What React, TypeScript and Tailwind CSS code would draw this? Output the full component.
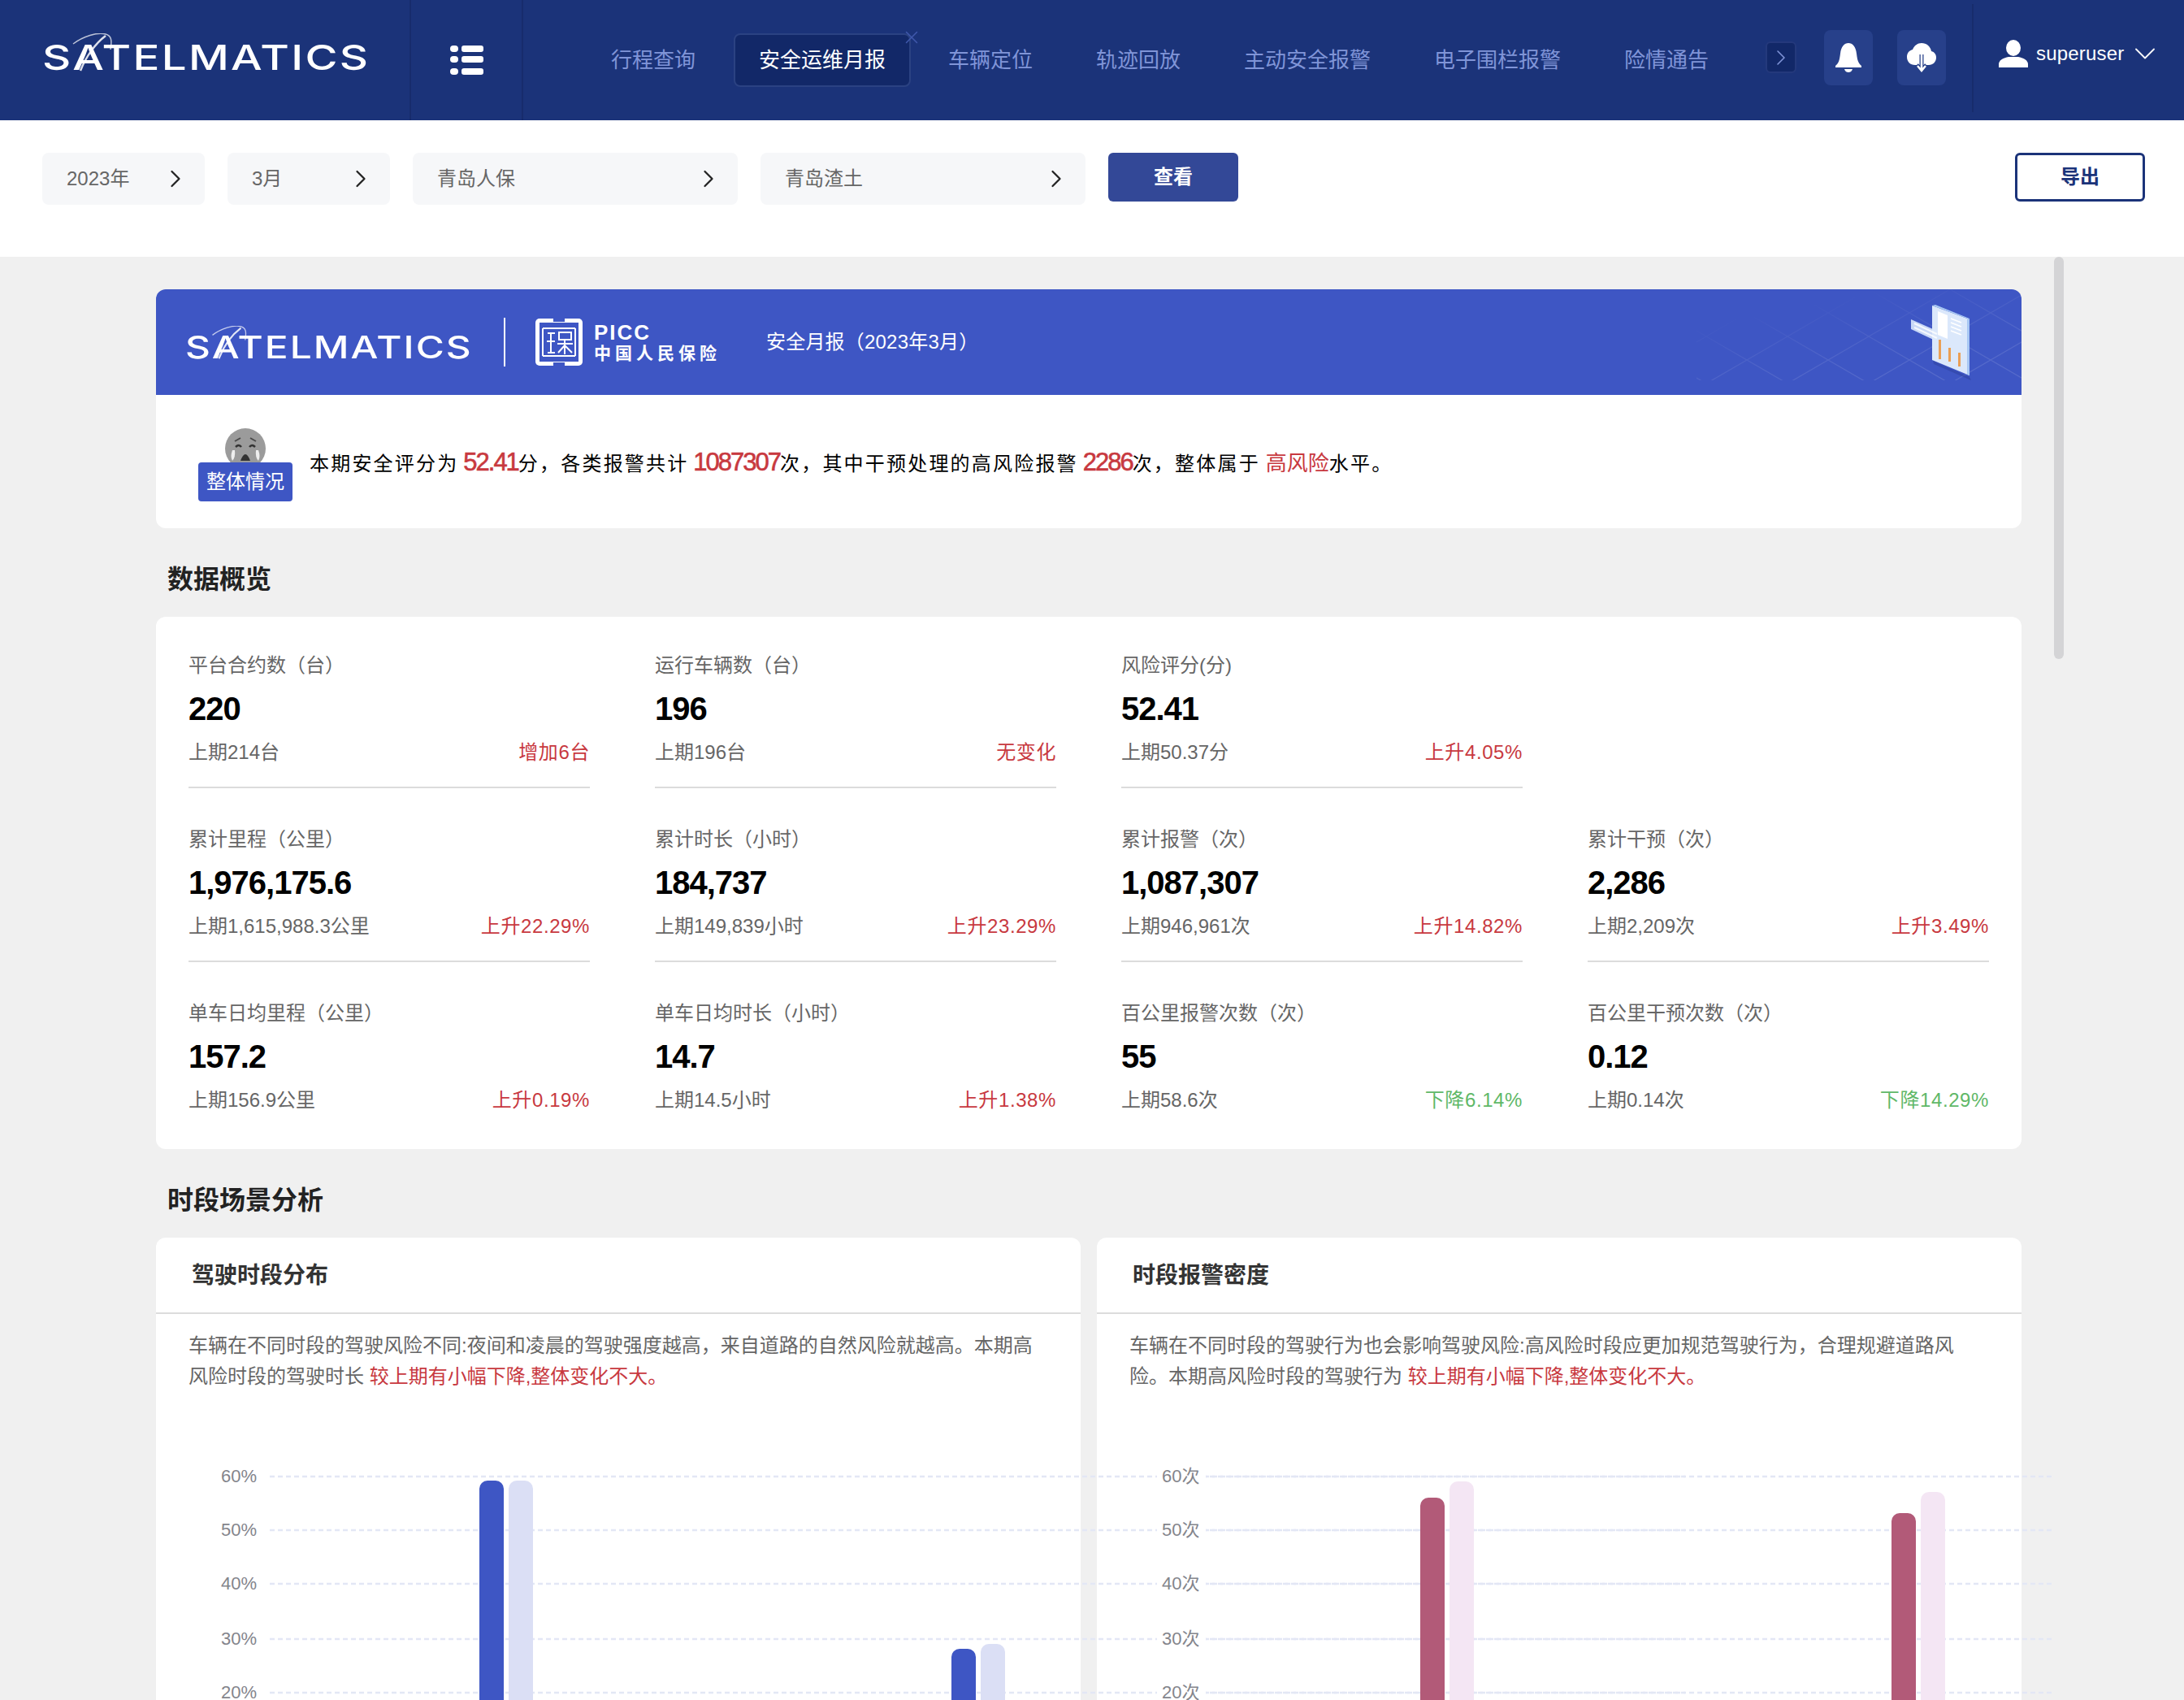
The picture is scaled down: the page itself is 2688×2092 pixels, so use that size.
import * as React from "react";
import { ChevronDown, ChevronRight, X } from "lucide-react";

const NAV = ["行程查询", "安全运维月报", "车辆定位", "轨迹回放", "主动安全报警", "电子围栏报警", "险情通告"];

type Stat = { label: string; value: string; prev: string; delta: string; down?: boolean } | null;

const STATS: Stat[] = [
  { label: "平台合约数（台）", value: "220", prev: "上期214台", delta: "增加6台" },
  { label: "运行车辆数（台）", value: "196", prev: "上期196台", delta: "无变化" },
  { label: "风险评分(分)", value: "52.41", prev: "上期50.37分", delta: "上升4.05%" },
  null,
  { label: "累计里程（公里）", value: "1,976,175.6", prev: "上期1,615,988.3公里", delta: "上升22.29%" },
  { label: "累计时长（小时）", value: "184,737", prev: "上期149,839小时", delta: "上升23.29%" },
  { label: "累计报警（次）", value: "1,087,307", prev: "上期946,961次", delta: "上升14.82%" },
  { label: "累计干预（次）", value: "2,286", prev: "上期2,209次", delta: "上升3.49%" },
  { label: "单车日均里程（公里）", value: "157.2", prev: "上期156.9公里", delta: "上升0.19%" },
  { label: "单车日均时长（小时）", value: "14.7", prev: "上期14.5小时", delta: "上升1.38%" },
  { label: "百公里报警次数（次）", value: "55", prev: "上期58.6次", delta: "下降6.14%", down: true },
  { label: "百公里干预次数（次）", value: "0.12", prev: "上期0.14次", delta: "下降14.29%", down: true },
];

function Logo({ large }: { large?: boolean }) {
  return (
    <div className={large ? "relative w-[398px] h-[48px]" : "relative w-[350px] h-[42px]"}>
      <span
        className={
          large
            ? "absolute left-0 bottom-[-5px] origin-left scale-x-[1.27] font-['Inter'] font-medium text-[43px] leading-[48px] tracking-[1.8px] text-white whitespace-nowrap"
            : "absolute left-0 bottom-[-5px] origin-left scale-x-[1.26] font-['Inter'] font-medium text-[38px] leading-[42px] tracking-[1.6px] text-white whitespace-nowrap"
        }
      >
        SATELMATICS
      </span>
      <svg viewBox="0 0 100 48" className={large ? "absolute left-0 top-0 w-[100px] h-[48px]" : "absolute left-0 top-0 w-[88px] h-[42px]"}>
        <path d="M38 13C50 4 68 -2 78 1C85 3 86 8 84 20" fill="none" stroke="#fff" strokeWidth="1.5" opacity="0.7" />
        <path d="M47 46C54 28 66 12 78 3" fill="none" stroke="#fff" strokeWidth="2.5" opacity="0.85" />
      </svg>
    </div>
  );
}

function Seal() {
  return (
    <svg viewBox="0 0 58 58" className="w-[58px] h-[58px]">
      <rect x="0" y="0" width="58" height="58" rx="5" fill="#fff" />
      <rect x="5" y="5" width="48" height="48" fill="#3e56c4" />
      <g stroke="#fff" strokeWidth="2" fill="none">
        <path d="M9 12H49M9 46H49M9 12V46M49 12V46" />
        <path d="M15 18H24M19 18V42M14 28H24M15 42H24M29 17H44V26H29ZM27 31H46M36 26V44M36 33L28 42M36 33L45 42" />
      </g>
      <rect x="22" y="0" width="14" height="4" fill="#3e56c4" />
      <rect x="22" y="54" width="14" height="4" fill="#3e56c4" />
    </svg>
  );
}

function Illustration() {
  return (
    <svg viewBox="0 0 400 130" className="absolute right-0 top-0 w-[400px] h-[130px]">
      <defs>
        <pattern id="iso" width="100" height="58" patternUnits="userSpaceOnUse" patternTransform="translate(12 0)">
          <path d="M0 0L100 58M100 0L0 58" stroke="#fff" strokeWidth="1.2" opacity="0.12" />
        </pattern>
        <linearGradient id="fade" x1="0" y1="0" x2="0.7" y2="1">
          <stop offset="0.25" stopColor="#fff" stopOpacity="0" />
          <stop offset="0.7" stopColor="#fff" stopOpacity="0.75" />
          <stop offset="1" stopColor="#fff" stopOpacity="1" />
        </linearGradient>
        <mask id="fadeMask">
          <rect width="400" height="112" fill="url(#fade)" />
        </mask>
      </defs>
      <rect width="400" height="112" fill="url(#iso)" mask="url(#fadeMask)" />
      <path d="M291 88L336 108L338 112L292 92Z" fill="#2c3f9c" opacity="0.5" />
      <path d="M264 37L300 53V66L264 49Z" fill="#c9d8f7" />
      <path d="M290 20L336 37V106L290 87Z" fill="#dbe8fb" />
      <path d="M290 20L294 19L336 36V37L290 20ZM333 37L336 37V106L333 105Z" fill="#a8c8f3" />
      <path d="M297 27L309 32V61L297 56Z" fill="#fff" />
      <path d="M313 36L326 41M313 41L326 46M313 46L326 51M313 51L326 56" stroke="#fff" strokeWidth="1.5" />
      <path d="M268 42L296 55M268 47L296 60" stroke="#fff" strokeWidth="2" opacity="0.8" />
      <rect x="298" y="62" width="3" height="24" fill="#ea9f55" />
      <rect x="310" y="72" width="3" height="17" fill="#ea9f55" />
      <rect x="322" y="78" width="3" height="17" fill="#ea9f55" />
    </svg>
  );
}

function CryFace() {
  return (
    <svg viewBox="0 0 50 50" className="w-[50px] h-[50px]">
      <circle cx="25" cy="25" r="25" fill="#9b9b9b" />
      <path d="M12 16L19 12M38 16L31 12" stroke="#4a4a4a" strokeWidth="2" fill="none" />
      <path d="M13 23Q17 19 20 23M30 23Q33 19 37 23" stroke="#333" strokeWidth="2.5" fill="none" />
      <path d="M19 40Q25 24 31 40Z" fill="#333" />
      <path d="M9 27Q6 35 9 40Q13 36 12 27ZM41 27Q44 35 41 40Q37 36 38 27Z" fill="#eee" />
    </svg>
  );
}

function Chart({ className, unit, left, right, dark, light, dashOffset, labelBg, bars }: {
  className: string; unit: string; left: number; right: number; dark: string; light: string; dashOffset: number; labelBg?: boolean; bars: number[][];
}) {
  const rows = [[60, 294], [50, 360], [40, 426], [30, 494], [20, 560]];
  return (
    <svg width="1900" height="620" className={`absolute top-0 overflow-visible pointer-events-none ${className}`}>
      {rows.map(([v, y]) => (
        <g key={v}>
          <line x1={left} x2={right} y1={y} y2={y} stroke="#e3e7f5" strokeWidth="2.5" strokeDasharray="6 4" strokeDashoffset={dashOffset} />
          {labelBg && <rect x="74" y={y - 14} width="60" height="28" fill="#fff" />}
          <text x="80" y={y + 7} fontSize="22" fill="#84858c">{v}{unit}</text>
        </g>
      ))}
      {bars.map(([x, a, b]) => (
        <g key={x}>
          <path d={`M${x} 620V${a + 10}a10 10 0 0 1 10 -10h10a10 10 0 0 1 10 10V620Z`} fill={dark} />
          <path d={`M${x + 36} 620V${b + 10}a10 10 0 0 1 10 -10h10a10 10 0 0 1 10 10V620Z`} fill={light} />
        </g>
      ))}
    </svg>
  );
}

function Filter({ label, wide }: { label: string; wide?: boolean }) {
  return (
    <div className={`${wide ? "w-[400px]" : "w-[200px]"} h-[64px] rounded-[8px] bg-[#f6f7f9] flex items-center justify-between pl-[30px] pr-[18px] text-[24px] text-[#666666]`}>
      <span>{label}</span>
      <ChevronRight size={36} strokeWidth={1.5} className="text-[#222222]" />
    </div>
  );
}

function StatCell({ stat, last }: { stat: Stat; last: boolean }) {
  if (!stat) return <div />;
  return (
    <div className={last ? "pb-[24px] border-b-2 border-transparent" : "pb-[24px] border-b-2 border-[#dcdcdc]"}>
      <div className="text-[24px] leading-[36px] text-[#666666]">{stat.label}</div>
      <div className="mt-[11px] text-[40px] leading-[48px] tracking-[-1px] font-bold text-black">{stat.value}</div>
      <div className="mt-[12px] flex justify-between text-[24px] leading-[36px]">
        <span className="text-[#666666]">{stat.prev}</span>
        <span className={stat.down ? "tracking-[0.6px] text-[#5fb868]" : "tracking-[0.6px] text-[#c8393f]"}>{stat.delta}</span>
      </div>
    </div>
  );
}

function navItemClass(i: number) {
  if (i === 0) return "whitespace-nowrap mr-[47px]";
  if (i === 1) return "relative whitespace-nowrap mr-[46px] px-[29px] h-[66px] flex items-center rounded-[8px] bg-[#122868] border-2 border-[#2b4282] text-white";
  return "whitespace-nowrap mr-[78px]";
}

const RED_NUM = "ml-[-3px] text-[31px] font-normal tracking-[-2px] text-[#c8393f] [-webkit-text-stroke:0.6px_#c8393f]";

export default function App() {
  return (
    <div className="relative w-[2688px] h-[2092px] overflow-hidden bg-[#f0f0f0] font-['Liberation_Sans','Noto_Sans_CJK_SC',sans-serif]">
      <header className="h-[148px] bg-[#1b3379] flex">
        <div className="w-[504px] pl-[52px] pt-[41px]"><Logo large /></div>
        <div className="w-[140px] border-x-2 border-[#172c6c] flex items-center justify-center pb-[1px]">
          <svg viewBox="0 0 41 37" className="w-[41px] h-[37px]">
            {[1, 14, 29].map((y) => (
              <g key={y} fill="#fff">
                <rect x="0" y={y} width="10" height="8" rx="4" />
                <rect x="14" y={y} width="27" height="8" rx="3" />
              </g>
            ))}
          </svg>
        </div>
        <nav className="w-[1529px] h-[148px] pl-[108px] flex items-start text-[26px] text-[#8095d8]">
          <div className="flex items-center h-[66px] mt-[41px]">
            {NAV.map((n, i) => (
              <div key={n} className={navItemClass(i)}>
                {n}
                {i === 1 && <X size={26} strokeWidth={1.4} className="absolute right-[-16px] top-[-10px] text-[#3f58ab]" />}
              </div>
            ))}
          </div>
        </nav>
        <div className="flex-1 flex">
          <div className="flex items-start pt-[37px] gap-[30px] w-[223px]">
            <div className="w-[38px] h-[39px] mt-[14px] rounded-[6px] bg-[#122868] border-2 border-[#24397c] flex items-center justify-center">
              <ChevronRight size={32} strokeWidth={1.2} className="text-[#8095d8]" />
            </div>
            <div className="w-[60px] h-[68px] rounded-[8px] bg-[#27408a] flex items-center justify-center ml-[4px]">
              <svg viewBox="0 0 36 36" className="w-[36px] h-[36px]" fill="#fff">
                <path d="M18 0C23 0 27 4 28 13C29 21 30 25 34 28V30H2V28C6 25 7 21 8 13C9 4 13 0 18 0Z" />
                <path d="M13 32H23C22 35 20 36 18 36C16 36 14 35 13 32Z" />
              </svg>
            </div>
            <div className="w-[60px] h-[68px] rounded-[8px] bg-[#27408a] flex items-center justify-center">
              <svg viewBox="0 0 36 36" className="w-[36px] h-[36px]">
                <path d="M10 27C4 27 0 23 0 17C0 12 3 9 7 8C9 3 13 0 18 0C24 0 29 4 30 10C34 11 36 14 36 18C36 23 32 27 27 27Z" fill="#fff" />
                <path d="M18 14V34M12 27L18 34L24 27" stroke="#27408a" strokeWidth="5" fill="none" />
                <path d="M18 14V34M13 28L18 34L23 28" stroke="#fff" strokeWidth="2.5" fill="none" />
              </svg>
            </div>
          </div>
        </div>
        <div className="absolute left-[2427px] top-[5px] h-[133px] w-[2px] bg-[#172c6c]" />
        <div className="absolute left-[2460px] top-[49px] flex items-center h-[34px]">
          <svg viewBox="0 0 36 34" className="w-[36px] h-[34px]" fill="#fff">
            <ellipse cx="18" cy="10" rx="9" ry="10" />
            <path d="M0 34V30C0 25 6 22 12 21H24C30 22 36 25 36 30V34Z" />
          </svg>
          <span className="ml-[10px] text-[24px] tracking-[0.2px] text-white">superuser</span>
          <ChevronDown size={44} strokeWidth={1} className="ml-[3px] text-white" />
        </div>
      </header>

      <div className="h-[168px] bg-white pt-[40px] pl-[52px] pr-[48px] flex items-start">
        <div className="flex gap-[28px]">
          <Filter label="2023年" />
          <Filter label="3月" />
          <Filter label="青岛人保" wide />
          <Filter label="青岛渣土" wide />
        </div>
        <button className="ml-[28px] w-[160px] h-[60px] rounded-[6px] bg-[#334897] text-[24px] font-bold text-white">查看</button>
        <button className="ml-auto w-[160px] h-[60px] rounded-[6px] border-[3px] border-[#1b3379] bg-white text-[24px] font-bold text-[#1b3379]">导出</button>
      </div>

      <main className="w-[2296px] ml-[192px] pt-[40px]">
        <section className="rounded-[12px] bg-white">
          <div className="relative h-[130px] rounded-t-[12px] overflow-hidden bg-[#3e56c4] flex items-center text-white">
            <div className="ml-[36px] mb-[-2px]"><Logo /></div>
            <div className="ml-[42px] w-[2px] h-[60px] bg-white" />
            <div className="ml-[37px]"><Seal /></div>
            <div className="ml-[14px] flex flex-col">
              <span className="text-[26px] leading-[28px] font-bold tracking-[2px]">PICC</span>
              <span className="text-[21px] leading-[24px] font-bold tracking-[5px]">中国人民保险</span>
            </div>
            <span className="ml-[56px] text-[24px] tracking-[0.2px]">安全月报（2023年3月）</span>
            <Illustration />
          </div>
          <div className="relative h-[164px] flex items-start">
            <div className="relative ml-[52px] mt-[41px] w-[116px] h-[90px]">
              <div className="absolute left-[33px] top-0"><CryFace /></div>
              <div className="absolute left-0 top-[42px] w-[116px] h-[48px] rounded-[4px] bg-[#3e56c4] text-[24px] leading-[48px] text-white text-center">整体情况</div>
            </div>
            <p className="ml-[21px] mt-[63px] text-[24px] leading-[40px] tracking-[2.2px] text-black whitespace-nowrap">
              本期安全评分为 <b className={RED_NUM}>52.41</b>分，各类报警共计 <b className={RED_NUM}>1087307</b>次，其中干预处理的高风险报警 <b className={RED_NUM}>2286</b>次，整体属于 <b className="ml-[-2px] text-[26px] font-normal tracking-[0px] text-[#c8393f]">高风险</b>水平。
            </p>
          </div>
        </section>

        <h2 className="ml-[14px] mt-[41px] mb-[24px] text-[32px] leading-[44px] font-bold text-[#222222]">数据概览</h2>
        <section className="rounded-[12px] bg-white pt-[42px] pb-[16px] px-[40px] grid grid-cols-4 gap-x-[80px] gap-y-[45px]">
          {STATS.map((s, i) => <StatCell key={i} stat={s} last={i >= 8} />)}
        </section>

        <h2 className="ml-[14px] mt-[41px] mb-[24px] text-[32px] leading-[44px] font-bold text-[#222222]">时段场景分析</h2>
        <div className="relative grid grid-cols-2 gap-[20px]">
          <section className="h-[700px] rounded-t-[12px] bg-white">
            <h3 className="h-[94px] pl-[44px] border-b-2 border-[#dcdcdc] text-[28px] leading-[94px] font-bold text-[#333333]">驾驶时段分布</h3>
            <p className="mt-[20px] pl-[40px] text-[24px] leading-[38px] text-[#666666] whitespace-nowrap">
              车辆在不同时段的驾驶风险不同:夜间和凌晨的驾驶强度越高，来自道路的自然风险就越高。本期高<br />
              风险时段的驾驶时长 <span className="text-[#c8393f]">较上期有小幅下降,整体变化不大。</span>
            </p>
          </section>
          <section className="h-[700px] rounded-t-[12px] bg-white">
            <h3 className="h-[94px] pl-[44px] border-b-2 border-[#dcdcdc] text-[28px] leading-[94px] font-bold text-[#333333]">时段报警密度</h3>
            <p className="mt-[20px] pl-[40px] text-[24px] leading-[38px] text-[#666666] whitespace-nowrap">
              车辆在不同时段的驾驶行为也会影响驾驶风险:高风险时段应更加规范驾驶行为，合理规避道路风<br />
              险。本期高风险时段的驾驶行为 <span className="text-[#c8393f]">较上期有小幅下降,整体变化不大。</span>
            </p>
          </section>
          <Chart className="left-0" unit="%" left={140} right={1882} dark="#3e56c4" light="#dbdff5" dashOffset={0} bars={[[398, 299, 299], [979, 506, 500]]} />
          <Chart className="left-[1158px]" unit="次" left={134} right={1176} dark="#b25a78" light="#f4e6f4" dashOffset={5} labelBg bars={[[398, 320, 300], [978, 339, 313]]} />
        </div>
      </main>

      <div className="absolute left-[2528px] top-[316px] w-[12px] h-[495px] rounded-full bg-[#d4d4d6]" />
    </div>
  );
}
